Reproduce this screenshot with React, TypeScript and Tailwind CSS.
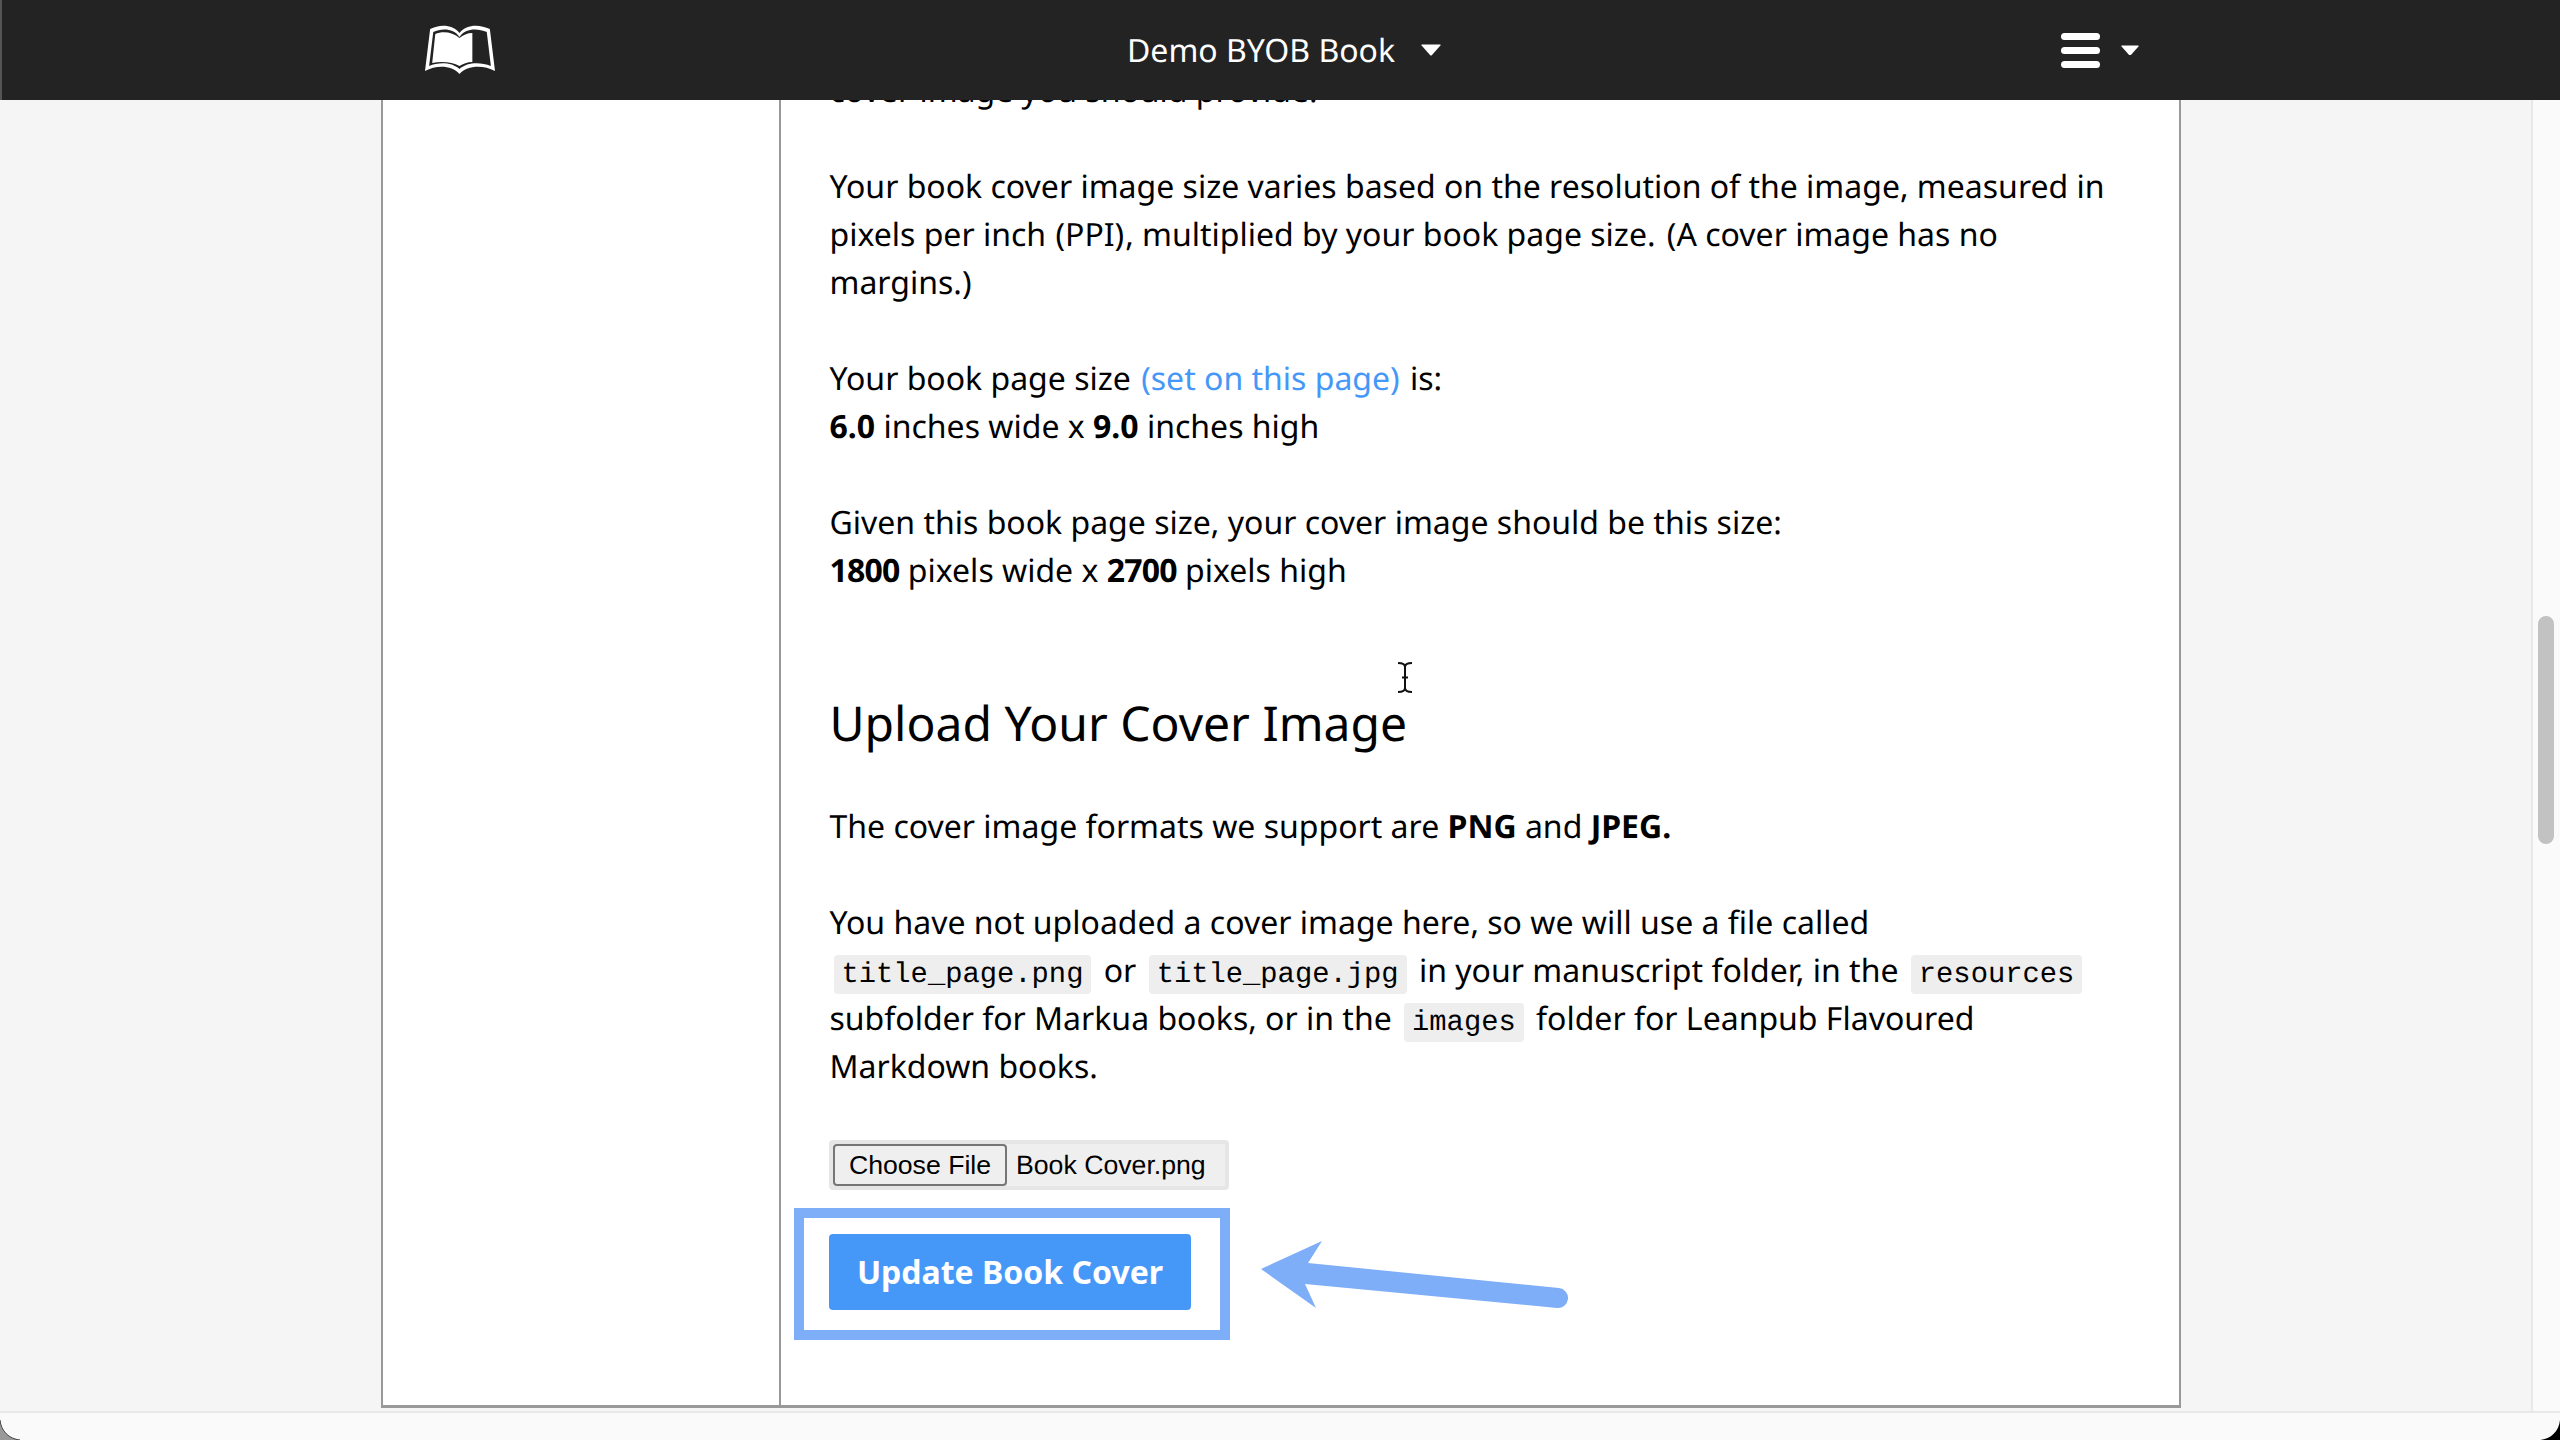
const bodyFont = "font-['Noto_Sans',sans-serif] [text-rendering:geometricPrecision]";

function BookIcon() {
  return (
    <svg width="70" height="50" viewBox="0 0 68 50" preserveAspectRatio="none" fill="none">
      {/* outer cover */}
      <path
        d="M5 4 C14 -1 27 -1 33.5 8 C40 -1 53 -1 63 4 L68 46 C57 40 41 40 33.5 49 C26 40 11 40 0 46 Z"
        fill="#fff"
      />
      {/* hollow inside */}
      <path
        d="M8 7 C16 3 28 3 33.5 12 C39 3 51 3 60 7 L64 41 C54 37 41 37 33.5 44 C26 37 13 37 4 41 Z"
        fill="#232323"
      />
      {/* white page */}
      <path d="M10 9 C17 6 27 7 33.5 13 C37 10 41 8 46 8 L46 37 C41 37 37 39 33.5 41 C27 37 16 36 7 38 Z" fill="#fff" />
    </svg>
  );
}

function Caret({ size = 20 }: { size?: number }) {
  return (
    <svg width={size} height={size * 0.6} viewBox="0 0 20 12">
      <path d="M1 0.5 H19 Q20 0.5 19.4 1.6 L11 11 Q10 12 9 11 L0.6 1.6 Q0 0.5 1 0.5 Z" fill="#fff" />
    </svg>
  );
}

function Code({ children }: { children: string }) {
  return (
    <code className="mx-[4px] rounded bg-[#eeeeee] px-[8px] py-[3px] font-['Liberation_Mono',monospace] text-[28.8px] leading-none">
      {children}
    </code>
  );
}

export default function App() {
  return (
    <div className={`relative flex h-screen flex-col overflow-hidden bg-[#f5f5f5] ${bodyFont} text-[32px] leading-[48px] text-black`}>
      {/* Top bar */}
      <nav className="z-10 flex h-[100px] shrink-0 items-center border-l-[2px] border-[#555555] bg-[#232323] pl-[423px] pr-[421px] text-white">
        <BookIcon />
        <div className="flex flex-1 items-center justify-center gap-[26px] pl-[12px]">
          <span className="pt-[2px] text-[32px]">Demo BYOB Book</span>
          <Caret />
        </div>
        <div className="flex items-center gap-[21px]">
          <div className="flex w-[39px] flex-col gap-[7px]">
            <div className="h-[7px] rounded-sm bg-white" />
            <div className="h-[7px] rounded-sm bg-white" />
            <div className="h-[7px] rounded-sm bg-white" />
          </div>
          <Caret size={18} />
        </div>
      </nav>

      {/* Page body */}
      <div className="flex min-h-0 flex-1">
        <div className="flex min-w-0 flex-1 pl-[381px] pr-[350px]">
          <div className="flex h-[1308px] w-[1800px] shrink-0 border-x-[2px] border-b-[3px] border-[#999999] bg-white">
            <aside className="w-[398px] shrink-0 border-r-[2px] border-[#999999]" />
            <main className="relative min-w-0 flex-1 pl-[48.5px] pr-[59px]">
              <p className="-mt-[33px]">cover image you should provide.</p>
              <p className="mt-[48px]">
                Your book cover image size varies based on the resolution of the image, measured in pixels per inch{" "}
                <span className="mx-[1px]">(PPI)</span>, multiplied by your book page size. <span className="ml-[3px]">(A</span> cover image has no margins.)
              </p>
              <p className="mt-[48px]">
                Your book page size <span className="mx-[2px] text-[#4698f8]">(set on this page)</span> is:
                <br />
                <b>6.0</b> inches wide x <b>9.0</b> inches high
              </p>
              <p className="mt-[48px]">
                Given this book page size, your cover image should be this size:
                <br />
                <b className="tracking-[-0.8px]">1800</b> pixels wide x <b className="tracking-[-0.8px]">2700</b> pixels high
              </p>
              <h2 className="mt-[93px] text-[48px] leading-[72px]">Upload Your Cover Image</h2>
              <p className="mt-[43px]">
                The cover image formats we support are <b>PNG</b> and <b>JPEG.</b>
              </p>
              <p className="mt-[48px]">
                You have not uploaded a cover image here, so we will use a file called
                <br />
                <Code>title_page.png</Code> or <Code>title_page.jpg</Code> in your manuscript folder, in the{" "}
                <Code>resources</Code> subfolder for Markua books, or in the <Code>images</Code> folder for Leanpub
                Flavoured Markdown books.
              </p>

              {/* Upload form */}
              <div className="mt-[49px] -ml-[0.5px] flex h-[50px] w-[400px] items-center rounded border-[4px] border-[#e6e6e6] bg-[#efefef] font-['Liberation_Sans',sans-serif] text-[26.67px] leading-none">
                <button className="flex h-[42px] w-[174px] items-center justify-center rounded-[4px] border-[2px] border-[#767676] bg-[#efefef] text-black">
                  Choose File
                </button>
                <span className="ml-[9px]">Book Cover.png</span>
              </div>
              <button className="mt-[44px] -ml-[0.5px] flex h-[76px] w-[362px] items-center justify-center rounded bg-[#4698f8] text-[32px] font-bold text-white">
                Update Book Cover
              </button>

              {/* Annotation over the button */}
              <div className="absolute left-[13px] top-[1108px] h-[132px] w-[436px] border-[10px] border-[#7eaef8]" />
              <svg className="absolute left-[477px] top-[1138px]" width="312" height="72" viewBox="0 0 312 72">
                <path d="M3 31 L64 3 L50 25 L301 50 A10 10 0 0 1 299 70 L47 46 L58 70 Z" fill="#7eaef8" />
              </svg>

              {/* Text cursor */}
              <svg className="absolute left-[617px] top-[562px]" width="14" height="31" viewBox="0 0 14 31" fill="none" stroke="#111" strokeWidth="2">
                <path d="M0 1 C4 1 7 2 7 5 V26 C7 29 4 30 0 30 M14 1 C10 1 7 2 7 5 M7 26 C7 29 10 30 14 30 M4 15.5 H10" />
              </svg>
            </main>
          </div>
        </div>

        {/* Scrollbar */}
        <div className="flex w-[29px] shrink-0 flex-col border-l-[2px] border-[#e8e8e8] bg-[#fafafa] pl-[5px] pt-[516px]">
          <div className="h-[228px] w-[16px] rounded-full bg-[#c2c2c2]" />
        </div>
      </div>

      {/* Bottom scrollbar track */}
      <div className="h-[29px] shrink-0 border-t-[2px] border-[#e8e8e8] bg-[#fafafa]" />

      {/* Window corners */}
      <svg className="absolute bottom-0 left-0" width="20" height="20" viewBox="0 0 20 20">
        <path d="M0 0 C1 11 9 19 20 20 H0 Z" fill="#999999" />
        <path d="M0 0 C1 11 9 19 20 20" fill="none" stroke="#444444" strokeWidth="1" />
      </svg>
      <svg className="absolute bottom-0 right-0" width="20" height="20" viewBox="0 0 20 20">
        <path d="M20 0 C19 11 11 19 0 20 H20 Z" fill="#000000" />
      </svg>
    </div>
  );
}
